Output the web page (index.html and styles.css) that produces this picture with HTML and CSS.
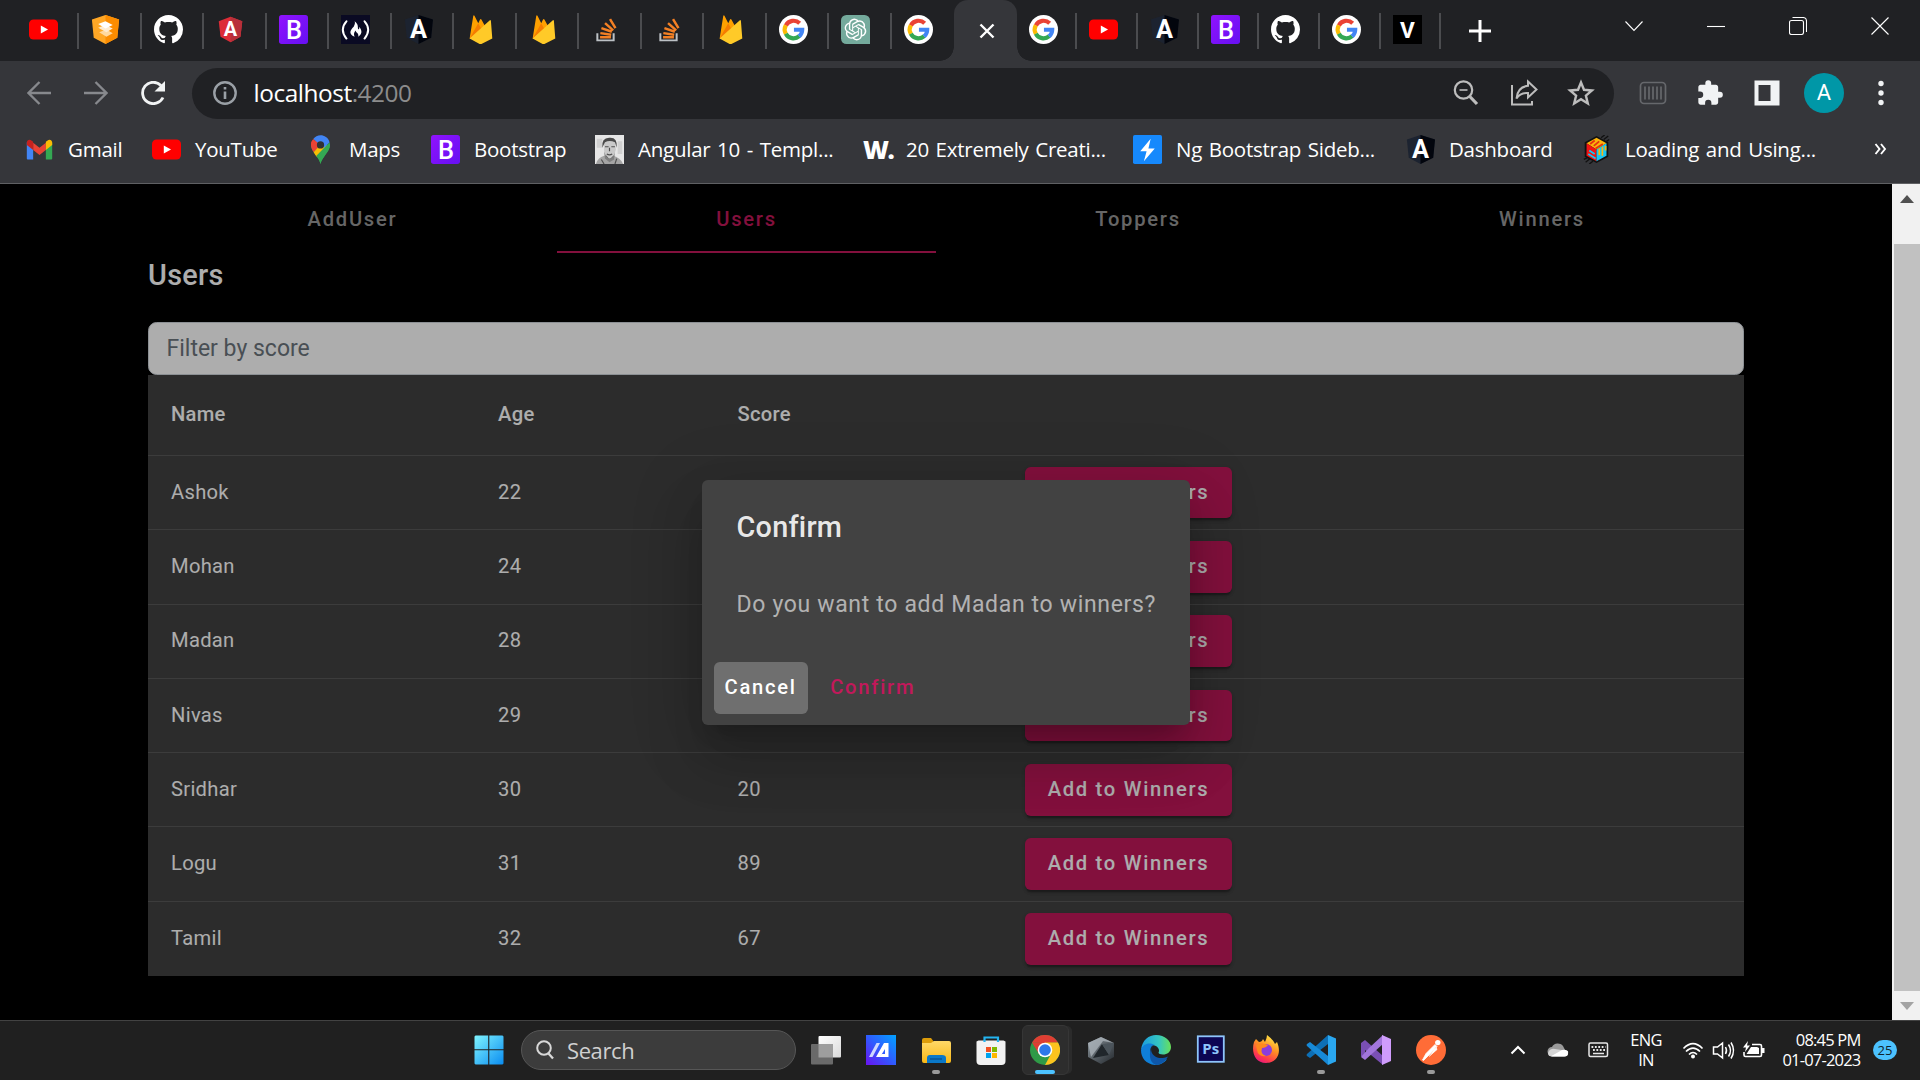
FILE: index.html
```html
<!DOCTYPE html>
<html lang="en">
<head>
<meta charset="utf-8">
<title>Users</title>
<link rel="stylesheet" href="styles.css">
</head>
<body>
<svg class="sprite" aria-hidden="true">
  <defs>
    <linearGradient id="gB" x1="0" y1="0" x2="1" y2="1"><stop offset="0" stop-color="#9013fe"/><stop offset="1" stop-color="#6610f2"/></linearGradient>
    <linearGradient id="gWin" x1="0" y1="0" x2="1" y2="1"><stop offset="0" stop-color="#7ff4ff"/><stop offset="1" stop-color="#0a8cf0"/></linearGradient>
    <linearGradient id="gFolder" x1="0" y1="0" x2="0" y2="1"><stop offset="0" stop-color="#ffd968"/><stop offset="1" stop-color="#f8b816"/></linearGradient>
    <linearGradient id="gM" x1="1" y1="0" x2="0" y2="1"><stop offset="0" stop-color="#00a3ff"/><stop offset=".5" stop-color="#2f5cff"/><stop offset="1" stop-color="#6a12f0"/></linearGradient>
    <linearGradient id="gEdge" x1="0" y1="0" x2="1" y2="0"><stop offset="0" stop-color="#1a9be0"/><stop offset=".6" stop-color="#35c6c0"/><stop offset="1" stop-color="#68e05a"/></linearGradient>
    <linearGradient id="gFox" x1=".8" y1="0" x2=".3" y2="1"><stop offset="0" stop-color="#fff14a"/><stop offset=".45" stop-color="#ff9124"/><stop offset=".8" stop-color="#ff3a4c"/><stop offset="1" stop-color="#e8187c"/></linearGradient>
    <linearGradient id="gTask" x1="0" y1="0" x2="1" y2="1"><stop offset="0" stop-color="#ffffff"/><stop offset="1" stop-color="#dadada"/></linearGradient>
    <linearGradient id="gCube" x1="0" y1="0" x2="1" y2="1"><stop offset="0" stop-color="#8b959c"/><stop offset="1" stop-color="#24292e"/></linearGradient>
  </defs>
  <symbol id="youtube" viewBox="0 0 32 32"><rect y="5" width="32" height="22" rx="5" fill="#f00"/><path d="M13 11.5v9l8-4.500z" fill="#fff"/></symbol>
  <symbol id="ngx" viewBox="0 0 32 32"><path d="M16 0 31 5 29 25 16 32 3 25 1 5z" fill="#ffa726"/><path d="M16 0 31 5 29 25 16 32z" fill="#fb8c00"/><path d="M9 19l8-3 7 4-7 4z" fill="#ffd9a0"/><path d="M8 14l8-3 8 4-7 4z" fill="#ffecd0"/><path d="M8 10l8-3 8 4-8 4z" fill="#fff"/></symbol>
  <symbol id="github" viewBox="0 0 16 16"><path fill="#fff" d="M8 0C3.580 0 0 3.580 0 8c0 3.540 2.290 6.530 5.470 7.590.4.070.55-.17.55-.38 0-.19-.01-.82-.01-1.490-2.010.37-2.530-.49-2.690-.94-.09-.23-.48-.94-.82-1.130-.28-.15-.68-.52-.01-.53.63-.01 1.080.58 1.230.82.72 1.210 1.870.87 2.330.66.07-.52.28-.87.51-1.070-1.780-.2-3.640-.89-3.640-3.950 0-.87.31-1.590.82-2.150-.08-.2-.36-1.020.08-2.120 0 0 .67-.21 2.200.82.64-.18 1.320-.27 2-.27s1.360.09 2 .27c1.530-1.040 2.200-.82 2.200-.82.44 1.100.16 1.920.08 2.120.51.56.82 1.270.82 2.150 0 3.070-1.870 3.750-3.650 3.950.29.25.54.73.54 1.480 0 1.070-.01 1.930-.01 2.200 0 .21.15.46.55.38A8.010 8.010 0 0 0 16 8c0-4.420-3.580-8-8-8z"/></symbol>
  <symbol id="angular" viewBox="0 0 32 32"><path d="M16 2 29 7 27 24 16 30 5 24 3 7z" fill="#dd2c37"/><path d="M16 2 29 7 27 24 16 30z" fill="#b8303a"/></symbol>
  <symbol id="bootstrap" viewBox="0 0 32 32"><rect width="32" height="32" rx="3" fill="url(#gB)"/></symbol>
  <symbol id="fcc" viewBox="0 0 32 32"><rect width="32" height="32" fill="#0a0a23"/><path d="M6 7Q-2 16 6 26M26 7q8 9 0 19" fill="none" stroke="#fff" stroke-width="2.200" stroke-linecap="round"/><path d="M15 7c5 4 3 6 4 9 2-1 1-2 1-3 4 5 3 8-1 11 1-4-2-4-3-7-2 3-2 4-1 7-7-3-5-7-1-11 1-2 2-4 1-6z" fill="#fff"/></symbol>
  <symbol id="adark" viewBox="0 0 32 32"><path d="M16 0 32 5 30 25 16 32 3 25 1 5z" fill="#1c2330"/><path d="M16 0 32 5 30 25 16 32z" fill="#02050d"/></symbol>
  <symbol id="firebase" viewBox="0 0 32 32"><path d="M4 26 8 1q.6-1.500 1.500 0l4 8 2-4q.7-1 1.500 0l11 20z" fill="#ffa000"/><path d="M4 26 13.500 9l4 7.500z" fill="#f57c00"/><path d="M4 26 26 6q1-1 1.500.5L29 26 17 32q-1 .5-2 0z" fill="#ffca28"/></symbol>
  <symbol id="stack" viewBox="0 0 32 32"><path d="M7 20v8h18v-8" fill="none" stroke="#bcc1c5" stroke-width="2.200"/><path d="M10 24.500h12M10.300 20l12 1.700M11.500 14.500l11.500 4M15.500 9l9 8M21 4.500l6 10" stroke="#f48024" stroke-width="2.700" fill="none"/></symbol>
  <symbol id="google" viewBox="0 0 32 32"><circle cx="16" cy="16" r="16" fill="#fff"/><g fill="none" stroke-width="4.600"><path d="M7.500 11.500A9.700 9.700 0 0 1 22.800 9.100" stroke="#ea4335"/><path d="M7.600 20.800A9.700 9.700 0 0 1 7.500 11.300" stroke="#fbbc05"/><path d="M7.500 20.600A9.700 9.700 0 0 0 22.300 23.400" stroke="#34a853"/><path d="M22.200 23.500A9.700 9.700 0 0 0 25.600 16.300H16.500" stroke="#4285f4"/></g></symbol>
  <symbol id="gpt" viewBox="0 0 32 32"><path d="M6 0h20a6 6 0 0 1 6 6v26H6a6 6 0 0 1-6-6V6a6 6 0 0 1 6-6z" fill="#74aa9c"/><path transform="translate(4 4)" fill="#fff" d="M22.282 9.821a5.985 5.985 0 0 0-.516-4.910 6.046 6.046 0 0 0-6.510-2.900A6.065 6.065 0 0 0 4.981 4.182a5.985 5.985 0 0 0-3.998 2.900 6.046 6.046 0 0 0 .743 7.097 5.980 5.980 0 0 0 .511 4.911 6.051 6.051 0 0 0 6.515 2.900A5.985 5.985 0 0 0 13.260 24a6.056 6.056 0 0 0 5.772-4.206 5.990 5.990 0 0 0 3.998-2.900 6.056 6.056 0 0 0-.748-7.073zM13.260 22.430a4.476 4.476 0 0 1-2.876-1.041l.142-.080 4.778-2.758a.795.795 0 0 0 .393-.681v-6.737l2.020 1.169a.071.071 0 0 1 .038.052v5.583a4.504 4.504 0 0 1-4.495 4.494zM3.600 18.304a4.471 4.471 0 0 1-.535-3.014l.142.085 4.783 2.759a.771.771 0 0 0 .781 0l5.843-3.369v2.332a.080.080 0 0 1-.033.062L9.740 19.950a4.500 4.500 0 0 1-6.140-1.646zM2.341 7.896a4.485 4.485 0 0 1 2.366-1.973V11.600a.766.766 0 0 0 .388.677l5.815 3.355-2.020 1.168a.076.076 0 0 1-.071 0l-4.830-2.787A4.504 4.504 0 0 1 2.341 7.872zm16.597 3.855-5.833-3.387 2.015-1.164a.076.076 0 0 1 .071 0l4.830 2.791a4.494 4.494 0 0 1-.677 8.105v-5.678a.790.790 0 0 0-.407-.667zm2.011-3.023-.142-.085-4.774-2.782a.776.776 0 0 0-.785 0L9.409 9.230V6.897a.066.066 0 0 1 .028-.061l4.830-2.787a4.499 4.499 0 0 1 6.680 4.660zM8.307 12.863l-2.020-1.164a.080.080 0 0 1-.038-.057V6.075a4.499 4.499 0 0 1 7.376-3.454l-.142.081-4.778 2.758a.795.795 0 0 0-.393.681zm1.097-2.365 2.602-1.500 2.607 1.500v2.999l-2.597 1.500-2.607-1.500z"/></symbol>
  <symbol id="vee" viewBox="0 0 32 32"><rect width="32" height="32" fill="#000"/></symbol>
  <symbol id="gmail" viewBox="0 0 32 32"><path d="M2 8v18q0 1 1 1h6V14z" fill="#4285f4"/><path d="M30 8v18q0 1-1 1h-6V14z" fill="#34a853"/><path d="M9 8.500 16 14l7-5.500v8L16 22l-7-5.500z" fill="#ea4335"/><path d="M2 8.500C2 5 5.500 4.500 7 6l2 1.500v9L2 11z" fill="#c5221f"/><path d="M30 8.500C30 5 26.500 4.500 25 6l-2 1.500v9l7-5.500z" fill="#fbbc04"/></symbol>
  <symbol id="maps" viewBox="0 0 32 32"><path d="M16 32C15 25 6 19 5.500 11h21C26 19 17 25 16 32z" fill="#34a853"/><path d="M7 6C4 11 6 15 8.500 19L19 8z" fill="#ea4335"/><path d="M8.500 19 21 5l2 9-11 10q-2-2-3.500-5z" fill="#fbbc04"/><path d="M26.500 11C26 19 17 25 16 32q-1-5-4.500-9L26 8z" fill="#34a853"/><path d="M8 4.500C12-1.500 23-1.500 26 8l-6 6-8-6z" fill="#4285f4"/><path d="M8 4.500 13 9 9 14 5.500 11q0-4 2.500-6.500z" fill="#ea4335"/><circle cx="16" cy="11" r="4" fill="#303134"/></symbol>
  <symbol id="portrait" viewBox="0 0 32 32"><rect width="32" height="32" fill="#e6e6e6"/><path d="M2 4h6v10H2zM25 7h5v14h-5z" fill="#d0d0d0"/><path d="M1 32q2-7 9-9h10q8 2 11 9z" fill="#a5a5a5"/><path d="M10 7q6-5 12 0l1 9q-2 9-7 10-5-1-6-9z" fill="#c9c9c9"/><path d="M8 14q-1-12 9-11 8 0 7 11l-2-6q-6-3-11 0z" fill="#4a4a4a"/><path d="M11 13h4m3 0h4M16 14v4m-3 3q3 2 6 0M12 23l4 5 5-5M7 27l3 5M24 26l-2 6" stroke="#505050" stroke-width="1.300" fill="none"/><path d="M10 18q2 7 6 8 4 0 6-7l-1 8-5 3-5-4z" fill="#808080"/></symbol>
  <symbol id="bolt" viewBox="0 0 32 32"><rect width="32" height="32" rx="2" fill="#1689fc"/><path d="M19.500 4 8 18h7l-3 11 12-14h-7z" fill="#fff"/></symbol>
  <symbol id="cube" viewBox="0 0 32 32"><path d="M16 1 29 8v16L16 31 3 24V8z" fill="#111"/><path d="M16 3 27 9l-11 7L5 9z" fill="#fbb40b"/><path d="M5 9l11 7v13L5 23z" fill="#f21313"/><path d="M27 9l-11 7v13l11-6z" fill="#18c5f4"/><path d="M9 10l5-4M13 12l6-5M15 15l8-5" stroke="#e53010" stroke-width="2"/><path d="M8 17l6 4M7 21l8 5" stroke="#18c5f4" stroke-width="2"/><path d="M19 15v7M22.500 13v10M26 12v5" stroke="#fbb40b" stroke-width="1.800"/><path d="M21 3l4-3M24 5l5-4M27 7l3-2M2 27l4-2M4 30l5-4M8 32l4-3" stroke="#111" stroke-width="1.500"/></symbol>
  <symbol id="back" viewBox="0 0 24 24"><path d="M24 12H2M12.500 1 1.500 12l11 11" fill="none" stroke="#87898d" stroke-width="2.300"/></symbol>
  <symbol id="forward" viewBox="0 0 24 24"><path d="M0 12h22M11.500 1l11 11-11 11" fill="none" stroke="#87898d" stroke-width="2.300"/></symbol>
  <symbol id="reload" viewBox="0 0 24 24"><path d="M22 16.500A10.700 10.700 0 1 1 20 4.500" fill="none" stroke="#f1f3f4" stroke-width="2.800"/><path d="M24 0v10.500H13.500z" fill="#f1f3f4"/></symbol>
  <symbol id="info" viewBox="0 0 24 24"><circle cx="12" cy="12" r="10.700" fill="none" stroke="#9aa0a6" stroke-width="2.400"/><path d="M12 10.500v7.500M12 6v2.600" stroke="#9aa0a6" stroke-width="2.600"/></symbol>
  <symbol id="zoomout" viewBox="0 0 28 28"><circle cx="11.500" cy="11" r="8.700" fill="none" stroke="#bdbdbd" stroke-width="2.200"/><path d="M17.800 17.500 25 25" stroke="#bdbdbd" stroke-width="3.200"/><path d="M7.500 11h8" stroke="#bdbdbd" stroke-width="1.600"/></symbol>
  <symbol id="share" viewBox="0 0 28 28"><path d="M2 6v19.500h20V22" fill="none" stroke="#bdbdbd" stroke-width="2"/><path d="M18 2.500l8.500 8L18 18.500V14q-8-.5-11.500 5.500Q7.500 8 18 6.800z" fill="none" stroke="#bdbdbd" stroke-width="2"/></symbol>
  <symbol id="star" viewBox="0 0 28 28"><path d="M14 3.500l3 7.300 7.900.7-6 5.100 1.900 7.800-6.800-4.200-6.800 4.200 1.900-7.800-6-5.100 7.900-.7z" fill="none" stroke="#bdbdbd" stroke-width="2.400"/></symbol>
  <symbol id="ext" viewBox="0 0 28 28"><rect x="1.500" y="3.500" width="25" height="21" rx="3.500" fill="none" stroke="#66686c" stroke-width="1.700"/><path d="M6 7.500v13M10 7.500v13M14 7.500v13M18 7.500v13M22 7.500v13" stroke="#66686c" stroke-width="1.700"/></symbol>
  <symbol id="puzzle" viewBox="0 0 24 24"><path fill="#f1f3f4" d="M20.500 11H19V7c0-1.100-.9-2-2-2h-4V3.500a2.500 2.500 0 0 0-5 0V5H4c-1.100 0-2 .9-2 2v3.800h1.500a2.700 2.700 0 0 1 0 5.400H2V20c0 1.100.9 2 2 2h3.800v-1.500a2.700 2.700 0 0 1 5.400 0V22H17c1.100 0 2-.9 2-2v-4h1.500a2.500 2.500 0 0 0 0-5z"/></symbol>
  <symbol id="panel" viewBox="0 0 28 28"><path fill="#f1f3f4" fill-rule="evenodd" d="M1.500 1.500h25v25h-25zM5.500 6v16h12V6z"/></symbol>
  <symbol id="more" viewBox="0 0 28 28"><g fill="#f1f3f4"><circle cx="14" cy="4.500" r="2.700"/><circle cx="14" cy="14" r="2.700"/><circle cx="14" cy="23.500" r="2.700"/></g></symbol>
  <symbol id="start" viewBox="0 0 30 30"><path fill="url(#gWin)" d="M1.500.5h12.700v13.700H.5V1.500zM15.300.5H28.500l1 1v12.700H15.300zM.5 15.300h13.700v14.200H1.500l-1-1zM15.300 15.300h14.200v13.200l-1 1H15.300z"/></symbol>
  <symbol id="taskview" viewBox="0 0 30 30"><rect x="7.500" y="1" width="22.500" height="21.500" rx="1" fill="url(#gTask)"/><rect x="0" y="9" width="22" height="20.500" rx="1" fill="#6a6a6a"/><path d="M7.500 9H22v13.500H7.500z" fill="#9e9e9e"/></symbol>
  <symbol id="myasus" viewBox="0 0 30 30"><rect width="30" height="30" fill="url(#gM)"/><path d="M3 22 10.500 8h3.500L6.500 22z" fill="#cfd8ff"/><path d="M10 22l8-14h4.500v14h-3.500v-8l-5 8z" fill="#fff"/><path d="M15.500 19h4v3h-6z" fill="#fff"/></symbol>
  <symbol id="folder" viewBox="0 0 30 30"><path d="M1 5q0-2 2-2h7l3 4v4H1z" fill="#dc9c0a"/><path d="M1 8h9l3-2h15q2 0 2 2v18q0 2-2 2H3q-2 0-2-2z" fill="url(#gFolder)"/><path d="M6 28v-5q0-3 3-3h12q4 0 4 3v5z" fill="#0a78c8"/><path d="M9 24h12" stroke="#054f8f" stroke-width="1.300"/></symbol>
  <symbol id="store" viewBox="0 0 30 30"><path d="M2.500 5.500h25l2 1V26q0 4-4 4h-21q-4 0-4-4V6.500z" fill="#f2f2f2"/><path d="M8.500 7V2.500h13.500V7" fill="none" stroke="#23b4f0" stroke-width="2.200"/><path d="M10 12h5v5h-5z" fill="#f25022"/><path d="M16 12h5v5h-5z" fill="#7fba00"/><path d="M10 18h5v5h-5z" fill="#00a4ef"/><path d="M16 18h5v5h-5z" fill="#ffb900"/></symbol>
  <symbol id="chrome" viewBox="0 0 30 30"><circle cx="15" cy="15" r="15" fill="#2f9a47"/><path d="M2 7.500A15 15 0 0 1 28 7.500L15 8z" fill="#df3e33"/><path d="M2 7.500 9 19 15 7.500z" fill="#df3e33"/><path d="M28 7.500A15 15 0 0 1 15 30L21.500 18 15 7.500z" fill="#fcc31e"/><circle cx="15" cy="15" r="7.300" fill="#fff"/><circle cx="15" cy="15" r="5.800" fill="#2d78ea"/></symbol>
  <symbol id="crystal" viewBox="0 0 30 30"><path d="M15 2 28 8v14l-13 7-13-7V8z" fill="url(#gCube)"/><path d="M15 2 28 8l-11-2L5 22 2 8z" fill="#aeb6bc" opacity=".75"/><path d="M16 9 23 20 7 23z" fill="#20262b"/><path d="M16 9 28 8 23 20z" fill="#4b545b"/></symbol>
  <symbol id="edge" viewBox="0 0 30 30"><path d="M0 15C1 5 8 0 15 0c9 0 15 6 15 12 0 5-4 7.500-8 7.500-3 0-4.500-1-4.500-2 1.500-2 0-6-4-7C8 9 2 11 0 15z" fill="url(#gEdge)"/><path d="M0 15C2 8 9 7 14 10c-5 0-6 6-3 11 3 5 9 6 15 3-3 5-9 6-12 6C5 29 0 23 0 15z" fill="#0f7fd8"/><path d="M12 11c-3 2-2 7 1 9.500 4 3.500 9 3 14 1-3 6-8 8-12 8.500C8 28 7 17 12 11z" fill="#0e56a8"/></symbol>
  <symbol id="ps" viewBox="0 0 30 30"><rect x="1.800" y="1.300" width="26" height="25.500" fill="#0c0653" stroke="#8ec5fb" stroke-width="1.800"/></symbol>
  <symbol id="firefox" viewBox="0 0 30 30"><path d="M3 7l2-3 3 3q3 0 4-3l2 3q2-4 2-7c4 3 7 6 8 9l2-2c5 11 0 21-11 21C4 28 0 17 3 7z" fill="url(#gFox)"/><circle cx="15" cy="15" r="6" fill="#8b3ddb"/><path d="M5 10q6-3 12 0-2 3-6 3-2 6 4 8-8 1-9-6z" fill="#ff8a1c"/></symbol>
  <symbol id="vscode" viewBox="0 0 30 30"><path d="M22 0 30 3.500v23L22 30z" fill="#2aa7f0"/><path d="M22 0v9L4 23l-3-2q-1-1 0-2z" fill="#0d6fb5"/><path d="M22 30v-9L4 7 1 9q-1 1 0 2z" fill="#1789d6"/></symbol>
  <symbol id="vs" viewBox="0 0 30 30"><path d="M0 8l4-3L22 21v9L4 15v9l-4-3z" fill="#7a4fb5"/><path d="M0 22l4 3L22 9V0L8 13z" fill="#a276dc"/><path d="M21 0l9 4v22l-9 4z" fill="#cf9cfb"/></symbol>
  <symbol id="postman" viewBox="0 0 30 30"><circle cx="15" cy="15" r="15" fill="#ff6c37"/><circle cx="21.800" cy="7.600" r="2.700" fill="#fff"/><path d="M19 9.500 10 18.500 6.500 25l1 .5L13 20l8-8.500zM20 12l1 2.500-8 7" fill="#fff" stroke="#fff" stroke-width=".8"/></symbol>
</svg>

<header class="tabstrip">
  <div class="tab"><svg><use href="#youtube"/></svg></div>
  <div class="tab"><svg><use href="#ngx"/></svg></div>
  <div class="tab"><svg><use href="#github"/></svg></div>
  <div class="tab"><svg viewBox="0 0 32 32"><use href="#angular"/><text x="16" y="23.500" class="mark" font-size="22" text-anchor="middle">A</text></svg></div>
  <div class="tab"><svg viewBox="0 0 32 32"><use href="#bootstrap"/><text x="16.500" y="26" class="mark thin" font-size="28" text-anchor="middle">B</text></svg></div>
  <div class="tab"><svg><use href="#fcc"/></svg></div>
  <div class="tab"><svg viewBox="0 0 32 32"><use href="#adark"/><text x="16" y="25" class="mark" font-size="28" text-anchor="middle">A</text></svg></div>
  <div class="tab"><svg><use href="#firebase"/></svg></div>
  <div class="tab"><svg><use href="#firebase"/></svg></div>
  <div class="tab"><svg><use href="#stack"/></svg></div>
  <div class="tab"><svg><use href="#stack"/></svg></div>
  <div class="tab"><svg><use href="#firebase"/></svg></div>
  <div class="tab"><svg><use href="#google"/></svg></div>
  <div class="tab"><svg><use href="#gpt"/></svg></div>
  <div class="tab plain"><svg><use href="#google"/></svg></div>
  <div class="tab active"><svg viewBox="0 0 16 16"><path d="M1.500 1.500l13 13m0-13l-13 13" stroke="#fff" stroke-width="2.400"/></svg></div>
  <div class="tab narrow"><svg><use href="#google"/></svg></div>
  <div class="tab narrow"><svg><use href="#youtube"/></svg></div>
  <div class="tab narrow"><svg viewBox="0 0 32 32"><use href="#adark"/><text x="16" y="25" class="mark" font-size="28" text-anchor="middle">A</text></svg></div>
  <div class="tab narrow"><svg viewBox="0 0 32 32"><use href="#bootstrap"/><text x="16.500" y="26" class="mark thin" font-size="28" text-anchor="middle">B</text></svg></div>
  <div class="tab narrow"><svg><use href="#github"/></svg></div>
  <div class="tab narrow"><svg><use href="#google"/></svg></div>
  <div class="tab narrow"><svg viewBox="0 0 32 32"><use href="#vee"/><text x="16" y="25" class="mark" font-size="25" text-anchor="middle">V</text></svg></div>
  <svg class="newtab" viewBox="0 0 22 22"><path d="M11 0v22M0 11h22" stroke="#fff" stroke-width="3"/></svg>
  <div class="caption">
    <svg viewBox="0 0 18 18"><path d="M.5 4.500 9 13.500l8.500-9"/></svg>
    <svg viewBox="0 0 18 18"><path d="M0 9.500h18"/></svg>
    <svg viewBox="0 0 18 18"><rect x=".5" y="3.500" width="14" height="14" rx="2"/><path d="M3.500.5h10.500a3.500 3.500 0 0 1 3.500 3.500V15"/></svg>
    <svg viewBox="0 0 18 18"><path d="M.5.5l17 17m0-17l-17 17"/></svg>
  </div>
</header>

<nav class="toolbar">
  <div class="navicons">
    <svg><use href="#back"/></svg>
    <svg><use href="#forward"/></svg>
    <svg><use href="#reload"/></svg>
  </div>
  <div class="omnibox">
    <svg class="site"><use href="#info"/></svg>
    <span class="url">localhost<span class="port">:4200</span></span>
    <div class="actions">
      <svg><use href="#zoomout"/></svg>
      <svg><use href="#share"/></svg>
      <svg><use href="#star"/></svg>
    </div>
  </div>
  <div class="extensions">
    <svg><use href="#ext"/></svg>
    <svg><use href="#puzzle"/></svg>
    <svg><use href="#panel"/></svg>
    <span class="avatar">A</span>
    <svg><use href="#more"/></svg>
  </div>
</nav>

<nav class="bookmarks">
  <div class="bm"><svg><use href="#gmail"/></svg><span>Gmail</span></div>
  <div class="bm"><svg><use href="#youtube"/></svg><span>YouTube</span></div>
  <div class="bm"><svg><use href="#maps"/></svg><span>Maps</span></div>
  <div class="bm"><svg viewBox="0 0 32 32"><use href="#bootstrap"/><text x="16.500" y="26" class="mark thin" font-size="28" text-anchor="middle">B</text></svg><span>Bootstrap</span></div>
  <div class="bm"><svg><use href="#portrait"/></svg><span>Angular 10 - Templ...</span></div>
  <div class="bm"><span class="wordmark">W.</span><span>20 Extremely Creati...</span></div>
  <div class="bm"><svg><use href="#bolt"/></svg><span>Ng Bootstrap Sideb...</span></div>
  <div class="bm"><svg viewBox="0 0 32 32"><use href="#adark"/><text x="16" y="25" class="mark" font-size="28" text-anchor="middle">A</text></svg><span>Dashboard</span></div>
  <div class="bm"><svg><use href="#cube"/></svg><span>Loading and Using...</span></div>
  <svg class="overflow" viewBox="0 0 12 12"><path d="M1 1l4 5-4 5M6.500 1l4 5-4 5" fill="none" stroke="#fff" stroke-width="1.900"/></svg>
</nav>

<main class="viewport">
  <div class="page">
    <div class="container">
      <div class="tabs">
        <div class="tablink">AddUser</div>
        <div class="tablink selected">Users</div>
        <div class="tablink">Toppers</div>
        <div class="tablink">Winners</div>
      </div>
      <h2 class="heading">Users</h2>
      <div class="filter">Filter by score</div>
      <div class="table">
        <div class="row head"><div>Name</div><div>Age</div><div>Score</div><div></div></div>
        <div class="row"><div>Ashok</div><div>22</div><div></div><div><span class="raised">Add to Winners</span></div></div>
        <div class="row"><div>Mohan</div><div>24</div><div></div><div><span class="raised">Add to Winners</span></div></div>
        <div class="row"><div>Madan</div><div>28</div><div></div><div><span class="raised">Add to Winners</span></div></div>
        <div class="row"><div>Nivas</div><div>29</div><div></div><div><span class="raised">Add to Winners</span></div></div>
        <div class="row"><div>Sridhar</div><div>30</div><div>20</div><div><span class="raised">Add to Winners</span></div></div>
        <div class="row"><div>Logu</div><div>31</div><div>89</div><div><span class="raised">Add to Winners</span></div></div>
        <div class="row"><div>Tamil</div><div>32</div><div>67</div><div><span class="raised">Add to Winners</span></div></div>
      </div>
    </div>
    <div class="scrim">
      <div class="dialog">
        <h2 class="dialog-title">Confirm</h2>
        <p class="dialog-text">Do you want to add Madan to winners?</p>
        <div class="dialog-actions">
          <span class="btn focused">Cancel</span>
          <span class="btn primary">Confirm</span>
        </div>
      </div>
    </div>
  </div>
  <div class="scrollbar">
    <svg viewBox="0 0 14 8"><path d="M0 8 7 0l7 8z" fill="#505050"/></svg>
    <div class="thumb"></div>
    <svg viewBox="0 0 14 8"><path d="M0 0 7 8l7-8z" fill="#a3a3a3"/></svg>
  </div>
</main>

<footer class="taskbar">
  <div class="app"><svg><use href="#start"/></svg></div>
  <div class="search"><svg viewBox="0 0 18 20"><circle cx="8" cy="8" r="6.800" fill="none" stroke="#d8d8d8" stroke-width="2"/><path d="M12.500 13.500 17 18.500" stroke="#d8d8d8" stroke-width="2.300"/></svg><span>Search</span></div>
  <div class="app"><svg><use href="#taskview"/></svg></div>
  <div class="app"><svg><use href="#myasus"/></svg></div>
  <div class="app open"><svg><use href="#folder"/></svg></div>
  <div class="app"><svg><use href="#store"/></svg></div>
  <div class="app current"><svg><use href="#chrome"/></svg></div>
  <div class="app"><svg><use href="#crystal"/></svg></div>
  <div class="app"><svg><use href="#edge"/></svg></div>
  <div class="app"><svg viewBox="0 0 30 30"><use href="#ps"/><text x="14.800" y="18.800" class="ps-mark" font-size="15" text-anchor="middle">Ps</text></svg></div>
  <div class="app"><svg><use href="#firefox"/></svg></div>
  <div class="app open"><svg><use href="#vscode"/></svg></div>
  <div class="app"><svg><use href="#vs"/></svg></div>
  <div class="app open"><svg><use href="#postman"/></svg></div>
  <div class="tray">
    <svg class="wide" viewBox="0 0 40 24"><path d="M13.500 15.500 20 9l6.500 6.500" fill="none" stroke="#fff" stroke-width="2"/></svg>
    <svg class="wide" viewBox="0 0 40 24"><path d="M14 18a4.500 4.500 0 0 1 0-9 6.500 6.500 0 0 1 11-1l2 4-8 6z" fill="#9a9a9a"/><path d="M10 15q2-5 7-4l13 2q1 5-3 5.500H14q-4 0-4-3.500z" fill="#d5d5d5"/><path d="M13 18.300 24 12q6-1 6 3 0 3.500-4 3.500H14z" fill="#fff"/></svg>
    <svg class="wide" viewBox="0 0 40 24"><rect x="11" y="5" width="18.500" height="13.500" rx="1.500" fill="none" stroke="#e8e8e8" stroke-width="1.500"/><path d="M13.500 9h14M15 12h12" stroke="#e8e8e8" stroke-width="1.800" stroke-dasharray="1.800 1.600"/><path d="M15 15.500h11" stroke="#e8e8e8" stroke-width="1.500"/></svg>
    <div class="lang"><span>ENG</span><span>IN</span></div>
    <svg viewBox="0 0 30 24"><path d="M5.500 10.500Q15 1 24.500 10.500M8 13.500q7-7 14 0M11 16.500q4-4 8 0" fill="none" stroke="#fff" stroke-width="1.700"/><circle cx="15" cy="18.500" r="2" fill="#fff"/></svg>
    <svg viewBox="0 0 30 24"><path d="M5.500 9h4l5-4v15l-5-4h-4zM17.500 9q2 3.500 0 7M20.500 6.500q4 6 0 12M23 4.500q5 8 0 16" fill="none" stroke="#fff" stroke-width="1.500"/></svg>
    <svg viewBox="0 0 30 24"><path d="M14 6.500h8q1.500 0 1.500 1.500v9q0 1.500-1.500 1.500H7.500Q6 18.500 6 17v-3" fill="none" stroke="#fff" stroke-width="1.600"/><path d="M13 9h6l2 1v6H8.500zM24 10h2.500v5H24zM10 3 5 9.500h3L7 14l5-6.500H9z" fill="#fff"/></svg>
    <div class="clock"><span>08:45 PM</span><span>01-07-2023</span></div>
    <span class="count">25</span>
  </div>
</footer>
</body>
</html>
```
FILE: styles.css
```css
* { box-sizing: border-box; }

body {
  margin: 0;
  width: 1920px;
  height: 1080px;
  overflow: hidden;
  display: flex;
  flex-direction: column;
  background: #000;
  color: #fff;
  font-family: "Open Sans", "Noto Sans", sans-serif;
}

svg { display: block; flex: none; }
.sprite { position: absolute; width: 0; height: 0; }
.mark { fill: #fff; font-family: Roboto, sans-serif; font-weight: 700; }
.mark.thin { font-weight: 500; }
.ps-mark { fill: #8ec5fb; font-weight: 700; }

/* Tab strip */
.tabstrip {
  flex: none;
  height: 61px;
  display: flex;
  align-items: center;
  padding-left: 16.5px;
  background: #202124;
}
.tab {
  flex: none;
  width: 62.5px;
  height: 36px;
  padding-left: 12px;
  display: flex;
  align-items: center;
  border-right: 2px solid #4b4c4f;
}
.tab svg { width: 29px; height: 29px; margin-top: -2px; }
.tab.narrow { width: 60.7px; }
.tab.plain { border: 0; }
.tab.active {
  height: 61px;
  padding: 0 0 0 25px;
  border: 0;
  border-radius: 14px 14px 0 0;
  background: #35363a;
  position: relative;
}
.tab.active svg { width: 16px; height: 16px; margin-top: 0; }
.tab.active::before,
.tab.active::after {
  content: "";
  position: absolute;
  bottom: 0;
  width: 14px;
  height: 14px;
}
.tab.active::before { left: -14px; background: radial-gradient(circle at 0 0, transparent 13.5px, #35363a 14px); }
.tab.active::after { right: -14px; background: radial-gradient(circle at 100% 0, transparent 13.5px, #35363a 14px); }
.newtab { width: 22px; height: 22px; margin-left: 28px; }
.caption {
  margin: 0 31px 9px auto;
  display: flex;
  gap: 64px;
}
.caption svg { width: 18px; height: 18px; fill: none; stroke: #fff; stroke-width: 1.1; }

/* Address row */
.toolbar {
  flex: none;
  height: 65px;
  display: flex;
  align-items: center;
  padding-left: 27px;
  background: #35363a;
}
.navicons { display: flex; gap: 33px; padding-bottom: 2px; }
.navicons svg { width: 24px; height: 24px; }
.omnibox {
  width: 1422px;
  height: 51px;
  margin-left: 27px;
  padding: 0 19px 2px 20.5px;
  display: flex;
  align-items: center;
  border-radius: 26px;
  background: #202124;
}
.site { width: 24px; height: 24px; }
.url { margin-left: 17px; font-size: 24.4px; letter-spacing: -.45px; line-height: 30px; }
.port { color: #8c8c8c; }
.actions { margin-left: auto; display: flex; gap: 29.5px; }
.actions svg, .extensions svg { width: 28px; height: 28px; }
.extensions { margin-left: 25px; padding-bottom: 2px; display: flex; align-items: center; gap: 29px; }
.avatar {
  width: 40px;
  height: 40px;
  margin: 0 -6px;
  border-radius: 50%;
  background: #0097a7;
  font: 400 22px/40px Roboto, sans-serif;
  text-align: center;
}

/* Bookmarks */
.bookmarks {
  flex: none;
  height: 58px;
  padding: 0 0 11px 25px;
  display: grid;
  grid-template-columns: 127px 154px 125px 164px 268px 270px 273px 176px 292px 14px;
  align-items: center;
  background: #35363a;
  border-bottom: 1px solid #5f6063;
}
.bm {
  display: flex;
  align-items: center;
  gap: 14px;
  white-space: nowrap;
  font-size: 20.5px;
  letter-spacing: -.25px;
  word-spacing: 1.6px;
}
.bm svg { width: 29px; height: 29px; }
.wordmark { width: 29px; font-size: 25px; line-height: 29px; font-weight: 800; letter-spacing: -1.5px; }
.overflow { width: 13px; height: 12px; }

/* Page */
.viewport { flex: none; height: 836px; display: flex; }
.page {
  position: relative;
  width: 1892px;
  padding: 0 148px;
  background: #000;
  font-family: Roboto, sans-serif;
}
.tabs {
  display: grid;
  grid-template-columns: 409px 379px 402px 406px;
  height: 69px;
}
.tablink {
  display: flex;
  align-items: center;
  justify-content: center;
  border-bottom: 2px solid transparent;
  padding-top: 2px;
  font-size: 20.16px;
  font-weight: 500;
  letter-spacing: 1.75px;
  color: rgba(255, 255, 255, .6);
}
.tablink.selected { color: #c2185b; border-color: #c2185b; }
.tablink:nth-child(n + 3) { padding-left: 2px; }
.heading {
  margin: 0 0 24px;
  height: 45px;
  font-size: 28.8px;
  line-height: 45px;
  font-weight: 500;
  letter-spacing: .3px;
}
.filter {
  height: 53px;
  padding: 0 17.5px;
  border: 1px solid #ced4da;
  border-radius: 8.6px;
  background: #fff;
  color: #6c757d;
  font-size: 23px;
  line-height: 51px;
}
.table { background: #424242; height: 601px; }
.row {
  display: grid;
  grid-template-columns: 327px 239.5px 287.5px 1fr;
  align-items: center;
  height: 74.3px;
  border-bottom: 1px solid #595959;
  font-size: 20.16px;
  letter-spacing: .3px;
}
.row:last-child { border-bottom: 0; }
.row > div { padding: 0 0 2px 23px; }
.row > div:last-child { padding-bottom: 0; }
.row.head { height: 81px; font-weight: 500; }
.raised {
  display: block;
  width: 207px;
  height: 51.5px;
  border-radius: 5.8px;
  background: #c2185b;
  box-shadow: 0 4.3px 1.4px -2.9px rgba(0,0,0,.2), 0 2.9px 2.9px rgba(0,0,0,.14), 0 1.4px 7.2px rgba(0,0,0,.12);
  font-weight: 500;
  line-height: 51px;
  letter-spacing: 1.72px;
  text-align: center;
}

/* Modal */
.scrim {
  position: absolute;
  inset: 0;
  display: flex;
  align-items: center;
  justify-content: center;
  background: rgba(0, 0, 0, .32);
}
.dialog {
  width: 488px;
  height: 245px;
  display: flex;
  flex-direction: column;
  border-radius: 5.8px;
  background: #424242;
  box-shadow: 0 15.8px 21.6px -10px rgba(0,0,0,.2), 0 34.6px 54.7px 4.3px rgba(0,0,0,.14), 0 13px 66px 11.5px rgba(0,0,0,.12);
}
.dialog-title {
  margin: 0;
  padding: 24px 34.5px 0;
  font-size: 28.8px;
  line-height: 46px;
  font-weight: 500;
  letter-spacing: .25px;
  color: rgba(255, 255, 255, .9);
}
.dialog-text {
  margin: 0;
  padding: 38px 34.5px 0;
  font-size: 23px;
  line-height: 34px;
  letter-spacing: .66px;
  white-space: nowrap;
  color: rgba(255, 255, 255, .6);
}
.dialog-actions { margin-top: auto; padding: 11px 11.5px; display: flex; gap: 11.5px; }
.btn {
  height: 52px;
  padding: 0 11px;
  border-radius: 5.8px;
  font-size: 20.16px;
  font-weight: 500;
  line-height: 51px;
  letter-spacing: 1.75px;
}
.focused { background: #6f6f6f; }
.primary { color: #c2185b; }

.scrollbar {
  width: 28px;
  padding: 11px 0 10px;
  display: flex;
  flex-direction: column;
  align-items: center;
  justify-content: space-between;
  background: #f1f1f1;
}
.scrollbar svg { width: 14px; height: 8px; margin-left: 2px; }
.thumb { width: 26px; height: 747px; align-self: flex-end; margin-top: 30px; background: #c1c1c1; }

/* Taskbar */
.taskbar {
  flex: none;
  height: 60px;
  padding: 0 0 1px 461.5px;
  display: flex;
  align-items: center;
  background: #202020;
  border-top: 1px solid #424242;
}
.app {
  flex: none;
  width: 55px;
  height: 50px;
  display: flex;
  align-items: center;
  justify-content: center;
  position: relative;
}
.app svg { width: 30px; height: 30px; }
.app.open::after,
.app.current::after {
  content: "";
  position: absolute;
  bottom: 1px;
  left: 23.5px;
  width: 8px;
  height: 4px;
  border-radius: 2px;
  background: #9a9a9a;
}
.app.current {
  width: 47px;
  margin: 0 5px 0 3px;
  border: 1px solid #363636;
  border-radius: 6px;
  background: #2d2d2d;
  box-shadow: 4px 0 0 -1px #2b2b2b;
}
.app.current::after { left: 12.5px; bottom: 0; width: 20px; background: #4cc2ff; }
.search {
  width: 275px;
  height: 40px;
  margin: 0 2.5px 0 4.5px;
  padding: 0 0 1px 14px;
  display: flex;
  align-items: center;
  gap: 13px;
  border: 1px solid #565656;
  border-radius: 20px;
  background: #3c3c3c;
  color: #d0d0d0;
  font-size: 22px;
  letter-spacing: -.4px;
}
.search svg { width: 18px; height: 20px; }
.tray {
  margin-left: 39.5px;
  display: flex;
  align-items: center;
  font-size: 16.5px;
  line-height: 20px;
}
.tray svg { width: 30px; height: 24px; }
.tray svg.wide { width: 40px; }
.lang { width: 56px; margin-right: 4px; display: flex; flex-direction: column; align-items: center; letter-spacing: -.7px; }
.clock { width: 92.5px; display: flex; flex-direction: column; align-items: flex-end; letter-spacing: -.8px; white-space: nowrap; }
.count {
  width: 24px;
  height: 20px;
  margin-left: 12.5px;
  border-radius: 10px;
  background: #4cc2ff;
  color: #10222c;
  font-size: 13px;
  text-align: center;
}
```
